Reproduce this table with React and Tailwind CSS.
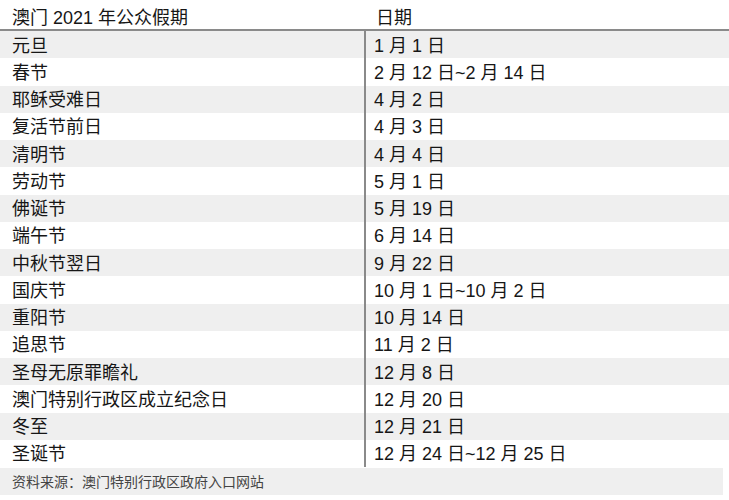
const rows = [
  ['元旦', '1 月 1 日'],
  ['春节', '2 月 12 日~2 月 14 日'],
  ['耶稣受难日', '4 月 2 日'],
  ['复活节前日', '4 月 3 日'],
  ['清明节', '4 月 4 日'],
  ['劳动节', '5 月 1 日'],
  ['佛诞节', '5 月 19 日'],
  ['端午节', '6 月 14 日'],
  ['中秋节翌日', '9 月 22 日'],
  ['国庆节', '10 月 1 日~10 月 2 日'],
  ['重阳节', '10 月 14 日'],
  ['追思节', '11 月 2 日'],
  ['圣母无原罪瞻礼', '12 月 8 日'],
  ['澳门特别行政区成立纪念日', '12 月 20 日'],
  ['冬至', '12 月 21 日'],
  ['圣诞节', '12 月 24 日~12 月 25 日'],
]

export default function App() {
  return (
    <div className="h-[500px] w-[729px] bg-white text-[#161616] font-['Liberation_Sans','Noto_Sans_CJK_SC',sans-serif]">
      <div className="flex h-[31px] items-end border-b-2 border-[#8a8a8a] pb-[2px] text-[18px] leading-none">
        <div className="w-[365px] pl-3">澳门 2021 年公众假期</div>
        <div className="pl-[11px]">日期</div>
      </div>

      <div>
        {rows.map(([name, date], i) => (
          <div
            key={name}
            className={`flex h-[27.25px] items-center text-[18px] leading-none ${i % 2 === 0 ? 'bg-[#efefef]' : 'bg-white'}`}
          >
            <div className="w-[364px] pl-3 pt-[2px]">{name}</div>
            <div className="flex h-full items-center border-l-2 border-[#8a8a8a] pl-[8px] pt-[2px]">{date}</div>
          </div>
        ))}
      </div>

      <div className="mt-[1px] mr-[6px] flex h-[27px] items-center bg-[#efefef] pl-3 pt-[1px] text-[14px] text-[#444]">
        资料来源：澳门特别行政区政府入口网站
      </div>
    </div>
  )
}
